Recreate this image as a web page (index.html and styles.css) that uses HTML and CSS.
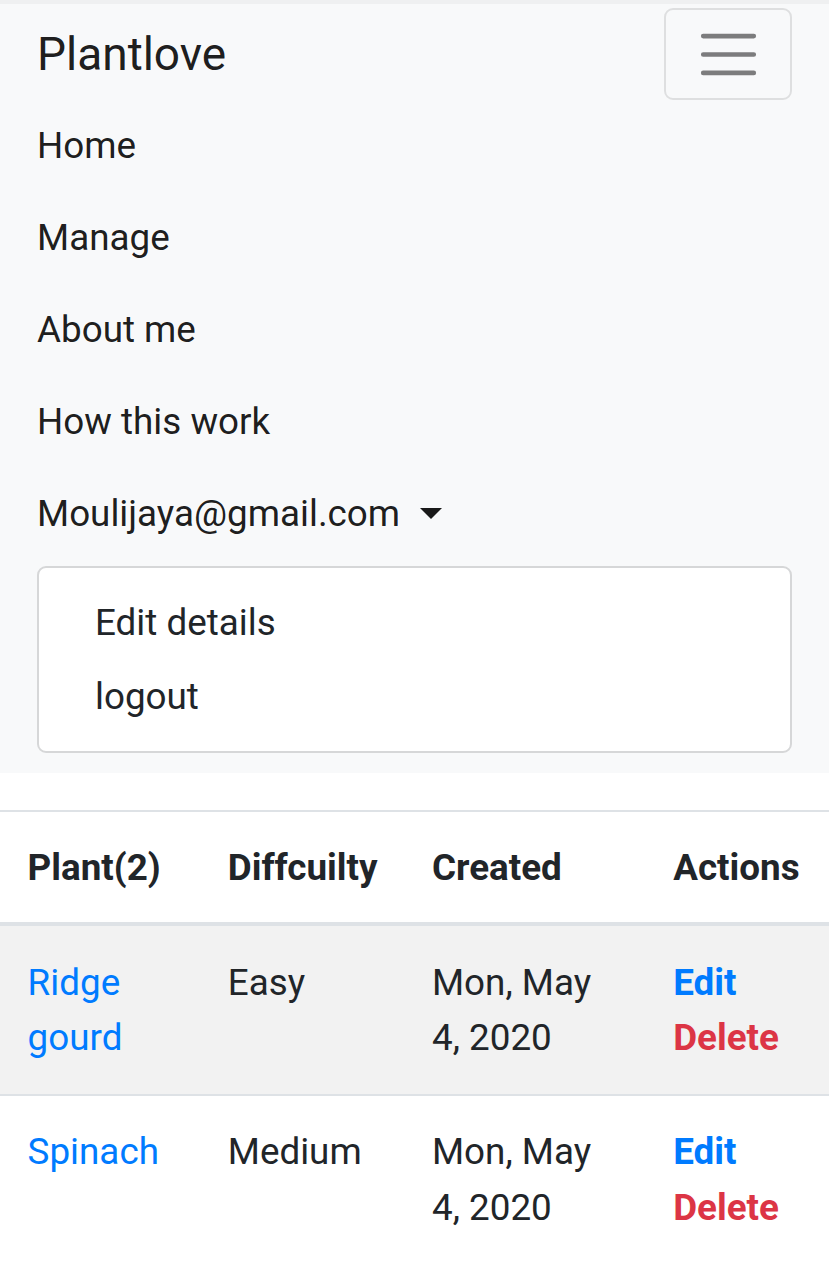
FILE: index.html
```html
<!DOCTYPE html>
<html>
<head>
<meta charset="utf-8">
<link rel="stylesheet" href="styles.css">
</head>
<body>
<div class="topstrip"></div>
<nav class="navbar">
  <div class="brand-row">
    <a class="brand" href="#">Plantlove</a>
    <button class="toggler" type="button">
      <svg class="toggler-icon" viewBox="0 0 30 30" width="69" height="69">
        <path d="M4 7h22M4 15h22M4 23h22" stroke="rgba(0,0,0,0.5)" stroke-width="2" stroke-linecap="round" fill="none"/>
      </svg>
    </button>
  </div>
  <ul class="nav">
    <li><a class="nav-link" href="#">Home</a></li>
    <li><a class="nav-link" href="#">Manage</a></li>
    <li><a class="nav-link" href="#">About me</a></li>
    <li><a class="nav-link" href="#">How this work</a></li>
    <li><a class="nav-link dropdown-toggle" href="#">Moulijaya@gmail.com</a>
      <div class="dropdown-menu">
        <a class="dropdown-item" href="#">Edit details</a>
        <a class="dropdown-item" href="#">logout</a>
      </div>
    </li>
  </ul>
</nav>
<table class="table">
  <thead>
    <tr>
      <th class="c1">Plant(2)</th>
      <th class="c2">Diffcuilty</th>
      <th class="c3">Created</th>
      <th class="c4">Actions</th>
    </tr>
  </thead>
  <tbody>
    <tr class="striped">
      <td><a class="plant" href="#">Ridge gourd</a></td>
      <td>Easy</td>
      <td>Mon, May 4, 2020</td>
      <td><a class="act edit" href="#">Edit</a><a class="act del" href="#">Delete</a></td>
    </tr>
    <tr>
      <td><a class="plant" href="#">Spinach</a></td>
      <td>Medium</td>
      <td>Mon, May 4, 2020</td>
      <td><a class="act edit" href="#">Edit</a><a class="act del" href="#">Delete</a></td>
    </tr>
  </tbody>
</table>
</body>
</html>
```
FILE: styles.css
```css
html, body {
  margin: 0;
  padding: 0;
}
body {
  font-family: Roboto, "Noto Sans", Arial, sans-serif;
  font-size: 36.8px;
  line-height: 1.5;
  color: #212529;
  background: #fff;
  width: 829px;
}
a {
  text-decoration: none;
}
.topstrip {
  height: 4px;
  background: #eff0f1;
}
.navbar {
  background: #f8f9fa;
  padding: 4px 37px 20px 37px;
}
.brand-row {
  display: flex;
  justify-content: space-between;
  align-items: center;
  height: 92px;
}
.brand {
  font-size: 46px;
  line-height: 69px;
  color: rgba(0,0,0,0.9);
}
.toggler {
  box-sizing: border-box;
  width: 128px;
  height: 92px;
  padding: 9px 27px;
  border: 2px solid rgba(0,0,0,0.1);
  border-radius: 9px;
  background: transparent;
  display: flex;
  align-items: center;
  justify-content: center;
}
.toggler-icon {
  display: block;
}
.nav {
  list-style: none;
  margin: 0;
  padding: 0;
}
.nav-link {
  display: block;
  padding: 18.4px 0;
  line-height: 55.2px;
  color: rgba(0,0,0,0.9);
}
.dropdown-toggle::after {
  content: "";
  display: inline-block;
  vertical-align: 7px;
  margin-left: 20px;
  border-top: 11px solid rgba(0,0,0,0.9);
  border-left: 11px solid transparent;
  border-right: 11px solid transparent;
}
.dropdown-menu {
  margin-top: 6px;
  background: #fff;
  border: 2px solid #d6d7d8;
  border-radius: 9px;
  padding: 18px 0;
}
.dropdown-item {
  display: block;
  padding: 9.2px 56px;
  line-height: 55.2px;
  color: #212529;
}
.table {
  margin-top: 37px;
  width: 829px;
  border-collapse: collapse;
  table-layout: fixed;
}
.table th, .table td {
  padding: 27.6px;
  line-height: 55.2px;
  text-align: left;
  vertical-align: top;
  border-top: 2px solid #dee2e6;
}
.table td {
  padding-top: 28.5px;
  padding-bottom: 28.5px;
}
.table th {
  font-weight: 700;
  border-bottom: 4px solid #dee2e6;
}
.c1 { width: 145px; }
.c2 { width: 149px; }
.c3 { width: 186px; }
.c4 { width: 129px; }
.striped {
  background: #f2f2f2;
}
.plant {
  color: #007bff;
}
.act {
  display: block;
  font-weight: 700;
}
.edit { color: #007bff; }
.del { color: #dc3545; }
```
